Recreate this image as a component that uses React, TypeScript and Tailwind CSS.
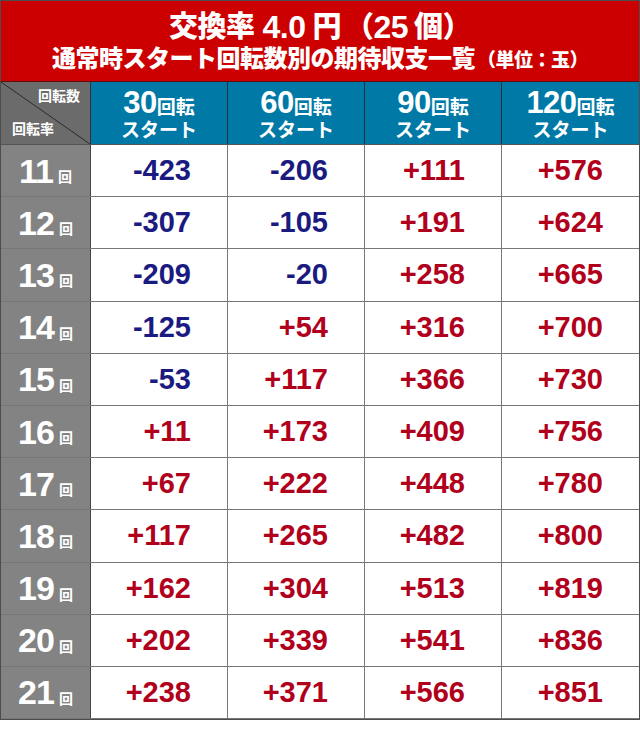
const rows: number[][] = [
  [11, -423, -206, 111, 576],
  [12, -307, -105, 191, 624],
  [13, -209, -20, 258, 665],
  [14, -125, 54, 316, 700],
  [15, -53, 117, 366, 730],
  [16, 11, 173, 409, 756],
  [17, 67, 222, 448, 780],
  [18, 117, 265, 482, 800],
  [19, 162, 304, 513, 819],
  [20, 202, 339, 541, 836],
  [21, 238, 371, 566, 851],
];

const spins = ["30", "60", "90", "120"];

const font = { fontFamily: '"Liberation Sans", "Noto Sans CJK JP", sans-serif' };

function fmt(n: number) {
  return n > 0 ? `+${n}` : `${n}`;
}

export default function App() {
  return (
    <div className="w-[640px] h-[731px] bg-white" style={font}>
      <div className="border border-[#4d4d4d]">
        {/* title */}
        <div className="h-[81px] bg-[#cc0000] flex flex-col items-center text-white font-black border-b border-[#5a1010]">
          <div className="mt-[7px] h-[38px] flex items-center leading-none tracking-[-0.5px]">
            <span className="text-[29px]">交換率</span>
            <span className="text-[32px] ml-[8px] mr-[7px] font-bold">4.0</span>
            <span className="text-[29px]">円</span>
            <span className="text-[29px] ml-[4px]">（</span>
            <span className="text-[32px] font-bold">25</span>
            <span className="text-[29px] ml-[6px]">個</span>
            <span className="text-[29px]">）</span>
          </div>
          <div className="mt-[1px] flex items-end leading-none tracking-[-0.5px]">
            <span className="text-[24px]">通常時スタート回転数別の期待収支一覧</span>
            <span className="text-[19px] ml-[2px] mb-[1px]">（単位：玉）</span>
          </div>
        </div>

        {/* column headers */}
        <div className="grid grid-cols-[90px_137px_137px_137px_1fr] h-[63px] border-b border-[#555]">
          <div className="relative bg-[#6b6b6b] border-r border-[#333] text-white font-bold text-[14px] leading-none flex flex-col justify-between px-[11px] pt-[7px] pb-[8px]">
            <svg className="absolute inset-0 w-full h-full" viewBox="0 0 90 63" preserveAspectRatio="none">
              <line x1="0" y1="0" x2="90" y2="63" stroke="#2a2a2a" strokeWidth="1" />
            </svg>
            <span className="relative self-end mr-[-1px]">回転数</span>
            <span className="relative self-start">回転率</span>
          </div>
          {spins.map((s, i) => (
            <div
              key={s}
              className={`bg-[#0079a6] text-white font-bold flex flex-col items-center justify-center leading-none ${
                i < 3 ? "border-r border-[#203040]" : ""
              }`}
            >
              <div className="flex items-end">
                <span className="text-[31px] tracking-[-0.5px]">{s}</span>
                <span className="text-[19px] mb-[1px]">回転</span>
              </div>
              <span className="text-[19px] mt-[3px]">スタート</span>
            </div>
          ))}
        </div>

        {/* body */}
        {rows.map((r) => (
          <div
            key={r[0]}
            className="grid grid-cols-[90px_137px_137px_137px_1fr] h-[52.2px] border-b border-[#777]"
          >
            <div className="bg-[#838383] border-r border-[#444] flex items-center justify-center text-white font-bold leading-none">
              <span className="text-[34px] tracking-[-1px]">{r[0]}</span>
              <span className="text-[14px] ml-[5px] mt-[13px]">回</span>
            </div>
            {r.slice(1).map((v, i) => (
              <div
                key={i}
                className={`flex items-center justify-end pr-[36px] font-bold text-[29px] leading-none ${
                  v < 0 ? "text-[#1a1a80]" : "text-[#b1001c]"
                } ${i < 3 ? "border-r border-[#777]" : ""}`}
              >
                {fmt(v)}
              </div>
            ))}
          </div>
        ))}
      </div>
    </div>
  );
}
